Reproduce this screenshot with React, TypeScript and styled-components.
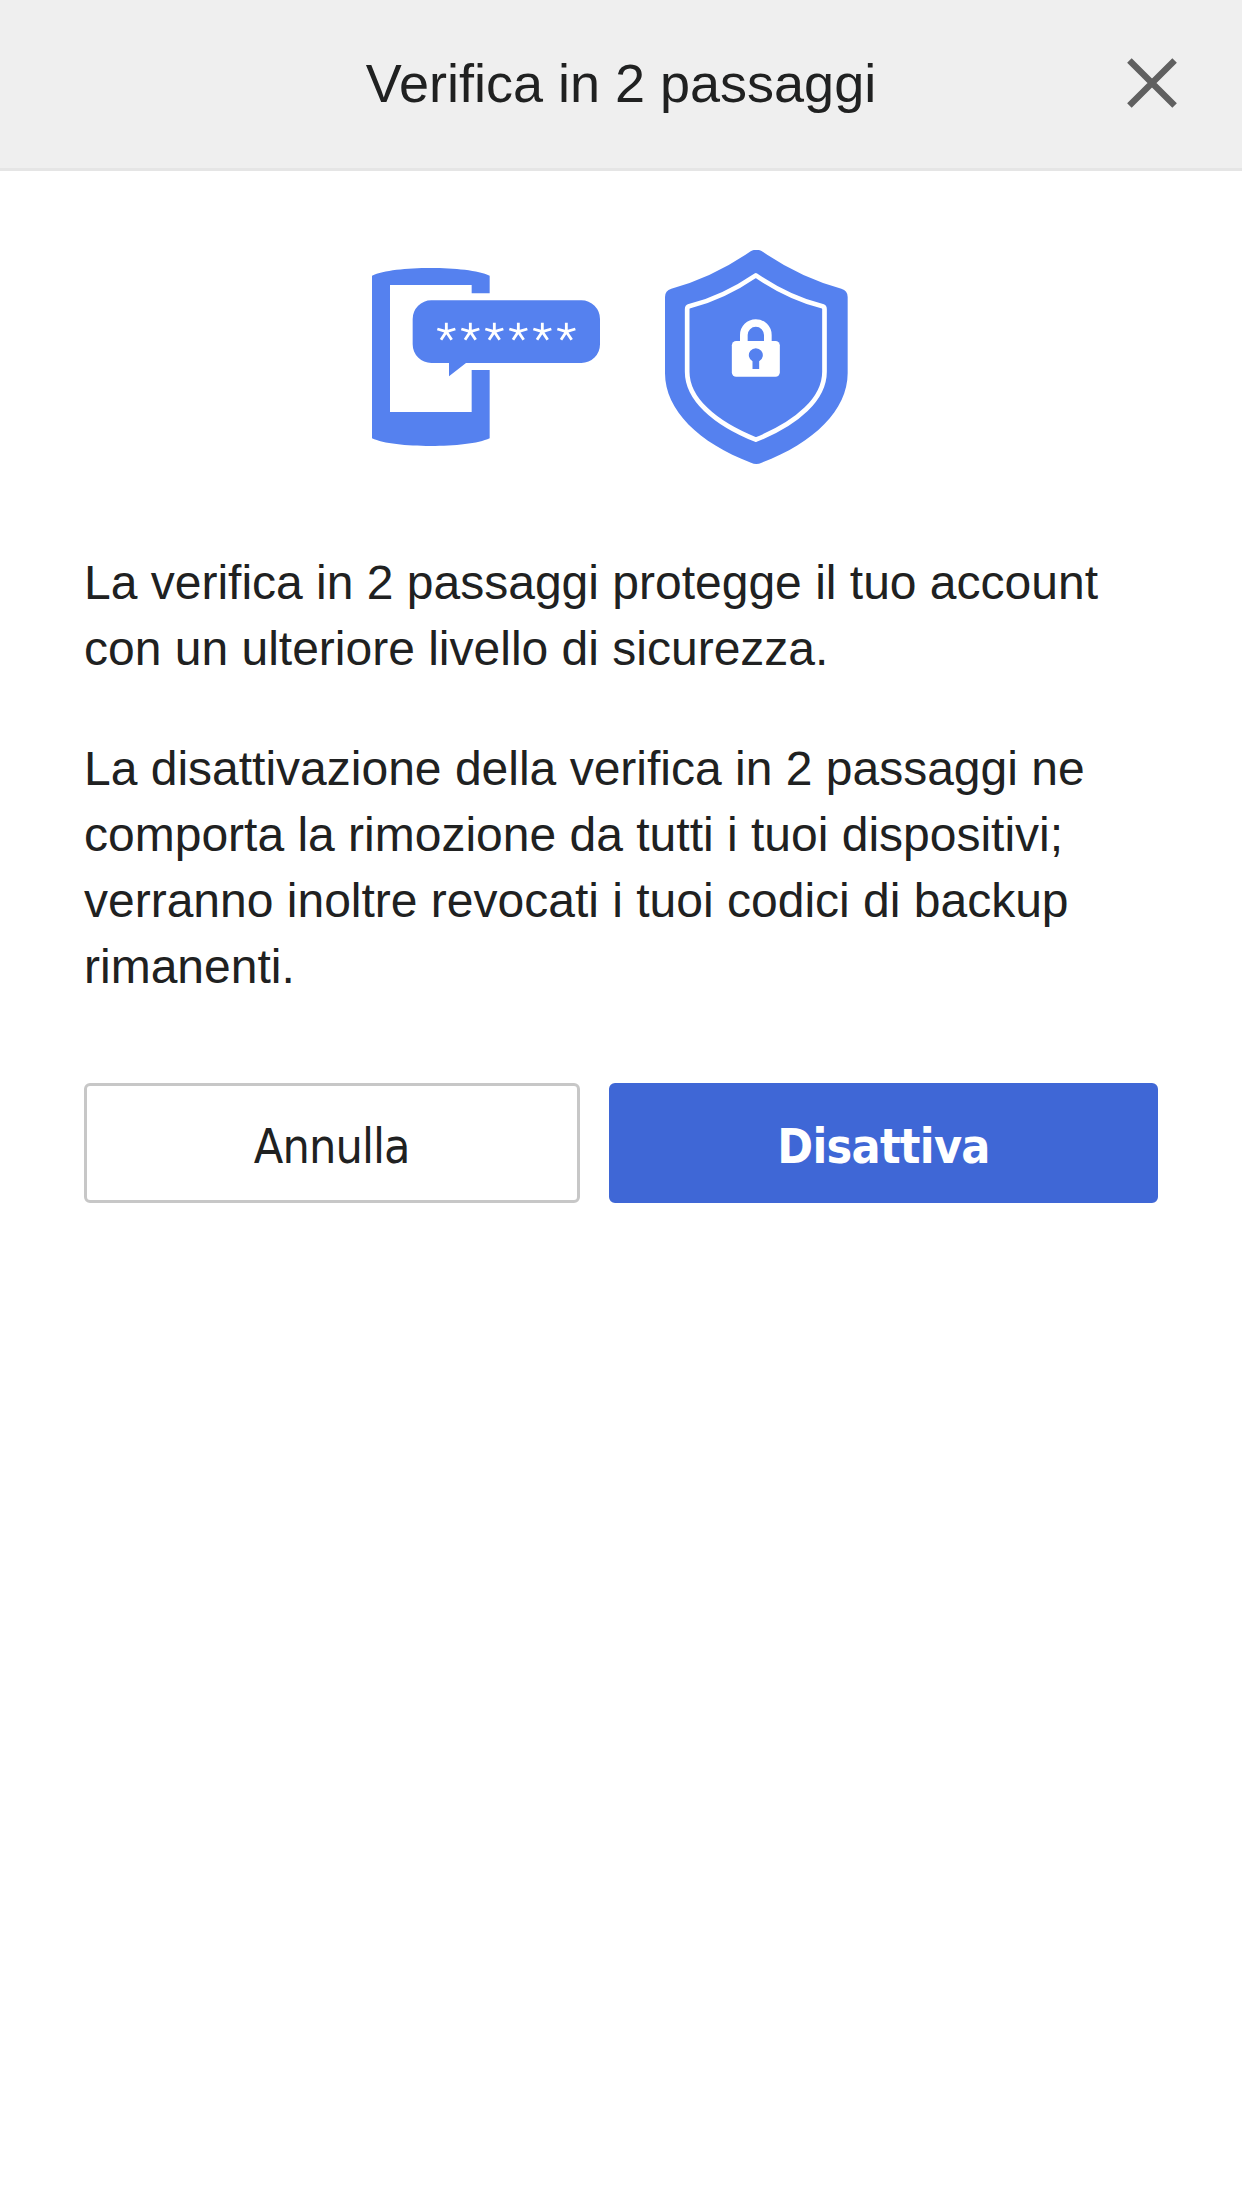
import React from 'react';
import styled, { createGlobalStyle } from 'styled-components';

const GlobalStyle = createGlobalStyle`
  *, *::before, *::after { box-sizing: border-box; }
  body {
    margin: 0;
    background: #fff;
    color: #202121;
    font-family: "Liberation Sans", Arial, sans-serif;
  }
`;

const Page = styled.div`
  display: flex;
  flex-direction: column;
  min-height: 100vh;
`;

const Header = styled.header`
  display: grid;
  grid-template-columns: 180px 1fr 180px;
  height: 171px;
  padding-top: 50px;
  align-items: start;
  background: #efefef;
  border-bottom: 3px solid #e5e5e5;
`;

const Title = styled.h1`
  grid-column: 2;
  margin: 0;
  font-size: 54px;
  font-weight: 400;
  line-height: 66px;
  text-align: center;
  white-space: nowrap;
`;

const CloseButton = styled.button`
  display: flex;
  justify-self: end;
  margin: 8px 65px 0 0;
  padding: 0;
  border: 0;
  background: none;
`;

const Main = styled.main`
  display: flex;
  flex-direction: column;
  padding: 79px 84px 0;
`;

const Illustration = styled.div`
  display: flex;
  align-items: flex-start;
  justify-content: center;
  gap: 65px;
  height: 300px;
  padding-right: 22px;
  color: #5581ef;
`;

const PhoneSlot = styled.div`
  display: flex;
  padding-top: 18px;
`;

const Copy = styled.div`
  display: flex;
  flex-direction: column;
  gap: 54px;
`;

const Paragraph = styled.p`
  margin: 0;
  font-size: 48px;
  line-height: 66px;
`;

const Actions = styled.div`
  display: grid;
  grid-template-columns: 495.5px 549px;
  gap: 29.5px;
  margin-top: 83px;
`;

const Button = styled.button<{ $primary?: boolean }>`
  height: 120px;
  padding: 6px 0 0;
  border: 3px solid ${(p) => (p.$primary ? '#3f67d6' : '#c7c7c7')};
  border-radius: 6px;
  background: ${(p) => (p.$primary ? '#3f67d6' : '#fff')};
  color: ${(p) => (p.$primary ? '#fff' : '#202121')};
  font-family: "DejaVu Sans Condensed", "DejaVu Sans", sans-serif;
  font-stretch: condensed;
  font-size: 48px;
  font-weight: ${(p) => (p.$primary ? 700 : 400)};
  letter-spacing: ${(p) => (p.$primary ? '-0.7px' : '-0.9px')};
  line-height: 60px;
`;

const CloseIcon = () => (
  <svg width="50" height="50" viewBox="0 0 50 50" fill="none" stroke="#606060" strokeWidth="6.4">
    <path d="M2.4 2.4L47.6 47.6M47.6 2.4L2.4 47.6" />
  </svg>
);

const stars = [259, 331, 403, 475, 547, 619];

const PhoneIcon = () => (
  <svg width="228" height="178" viewBox="36 84 684 534" fill="currentColor">
    <path d="M36 107C70 91 140 84 212 84S355 91 389 107V160H335V135H90V516H335V390H389V595C355 611 284 618 212 618S70 611 36 595Z" />
    <path d="M214 181H664A56 56 0 0 1 720 237V313A56 56 0 0 1 664 369H318L267 409V369H214A56 56 0 0 1 158 313V237A56 56 0 0 1 214 181Z" />
    <g stroke="#fff" strokeWidth="8.5" fill="none">
      {stars.map((x) => (
        <path key={x} transform={`translate(${x} 275)`} d="M0 0V-27M0 0L-27 -8M0 0L27 -8M0 0L-16 24M0 0L16 24" />
      ))}
    </g>
  </svg>
);

const ShieldIcon = () => (
  <svg width="183" height="215" viewBox="75.5 30 549 645" fill="currentColor">
    <path d="M331 34Q348 24 365 34Q480 113 603 146Q622 151 622 171V400C622 510 520 610 364 668Q348 676 332 668C176 610 74 510 74 400V171Q74 151 93 146Q216 113 331 34Z" transform="translate(1.5 0)" />
    <path
      d="M348 106Q446 173 548 199Q554 201 554 207V395C554 475 475 548 348 599C221 548 142 475 142 395V207Q142 201 148 199Q250 173 348 106Z"
      fill="none"
      stroke="#fff"
      strokeWidth="14"
      strokeLinejoin="round"
    />
    <path d="M312 308V285A36 36 0 0 1 384 285V308" fill="none" stroke="#fff" strokeWidth="23" />
    <rect x="276" y="303" width="144" height="107" rx="13" fill="#fff" />
    <path d="M338 387V364A21 21 0 1 1 358 364V387Z" />
  </svg>
);

export default function App() {
  return (
    <Page>
      <GlobalStyle />
      <Header>
        <Title>Verifica in 2 passaggi</Title>
        <CloseButton aria-label="Chiudi">
          <CloseIcon />
        </CloseButton>
      </Header>
      <Main>
        <Illustration>
          <PhoneSlot>
            <PhoneIcon />
          </PhoneSlot>
          <ShieldIcon />
        </Illustration>
        <Copy>
          <Paragraph>La verifica in 2 passaggi protegge il tuo account con un ulteriore livello di sicurezza.</Paragraph>
          <Paragraph>
            La disattivazione della verifica in 2 passaggi ne comporta la rimozione da tutti i tuoi dispositivi; verranno
            inoltre revocati i tuoi codici di backup rimanenti.
          </Paragraph>
        </Copy>
        <Actions>
          <Button>Annulla</Button>
          <Button $primary>Disattiva</Button>
        </Actions>
      </Main>
    </Page>
  );
}
